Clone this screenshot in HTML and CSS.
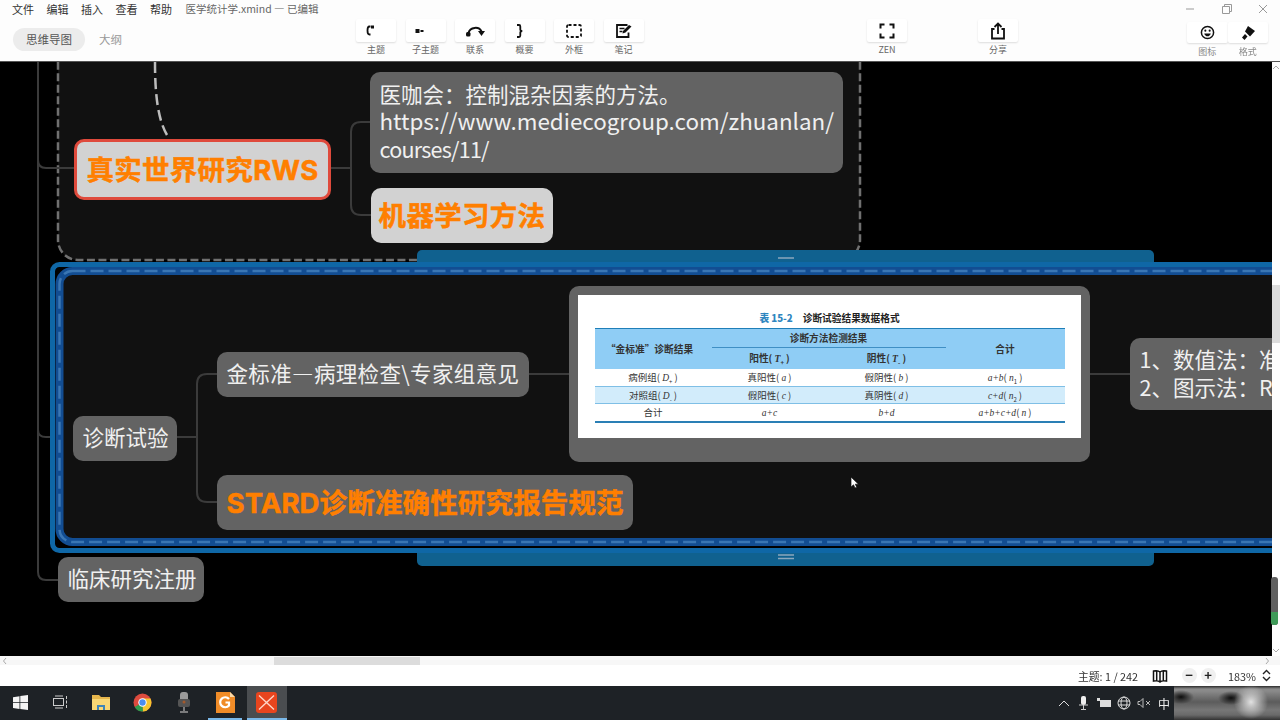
FILE: index.html
```html
<!DOCTYPE html>
<html lang="zh">
<head>
<meta charset="utf-8">
<title>医学统计学.xmind</title>
<link rel="stylesheet" href="styles.css">
</head>
<body>
<div class="app">
  <header class="header">
    <div class="left">
      <nav class="menu">
        <span>文件</span><span>编辑</span><span>插入</span><span>查看</span><span>帮助</span>
        <span class="filename">医学统计学.xmind — 已编辑</span>
      </nav>
      <div class="tabs"><span class="tab active">思维导图</span><span class="tab">大纲</span></div>
    </div>
    <div class="tools">
      <div class="tool"><div class="btn"><svg class="off" width="9" height="11" viewBox="0 0 9 11"><path d="M4.500 1.500H3.500C2 1.500 1.500 2.500 1.500 5.500s.5 4 2 4h1" fill="none" stroke="#111" stroke-width="1.800"/><rect x="5" y="0.500" width="3" height="3" fill="#111"/></svg></div><span>主题</span></div>
      <div class="tool"><div class="btn"><svg class="off" width="9" height="6" viewBox="0 0 9 6"><rect x="0.500" y="1" width="4" height="4" fill="#111"/><rect x="5.500" y="2" width="3" height="2" fill="#111"/></svg></div><span>子主题</span></div>
      <div class="tool"><div class="btn"><svg width="20" height="12" viewBox="0 0 20 12"><path d="M3.500 8C5 2 14 1 16.500 6.500" fill="none" stroke="#111" stroke-width="2"/><rect x="1" y="7" width="4.500" height="4.500" rx="1.500" fill="#111"/><path d="M13 6h7L16.500 11z" fill="#111"/></svg></div><span>联系</span></div>
      <div class="tool"><div class="btn"><svg class="off-s" width="9" height="14" viewBox="0 0 9 14"><path d="M1 1h2c1 0 1.300.7 1.300 1.500V5.500c0 1 .5 1.500 2 1.500-1.500 0-2 .5-2 1.500v3c0 .8-.3 1.500-1.300 1.500H1" fill="none" stroke="#111" stroke-width="1.800"/></svg></div><span>概要</span></div>
      <div class="tool"><div class="btn"><svg width="16" height="14" viewBox="0 0 16 14"><rect x="1" y="1" width="14" height="12" rx="1.500" fill="none" stroke="#111" stroke-width="1.800" stroke-dasharray="3 2"/></svg></div><span>外框</span></div>
      <div class="tool"><div class="btn"><svg width="16" height="14" viewBox="0 0 16 14"><path d="M12.500 8.500V13H1V1h10.500" fill="none" stroke="#111" stroke-width="1.800"/><path d="M3.500 4.500h5M3.500 7.500h3" stroke="#111" stroke-width="1.500"/><path d="M6.500 9.500l.5-2.500 6-6 2.500 1.500-6 6z" fill="#111"/></svg></div><span>笔记</span></div>
    </div>
    <div class="tool zen"><div class="btn"><svg width="16" height="16" viewBox="0 0 16 16"><path d="M1.500 5.500v-4h4M10.500 1.500h4v4M14.500 10.500v4h-4M5.500 14.500h-4v-4" fill="none" stroke="#111" stroke-width="2"/></svg></div><span>ZEN</span></div>
    <div class="tool share"><div class="btn"><svg width="16" height="18" viewBox="0 0 16 18"><path d="M4.500 7H2v9.500h12V7h-2.500" fill="none" stroke="#111" stroke-width="1.800"/><path d="M8 12V2M4.500 5L8 1.500 11.500 5" fill="none" stroke="#111" stroke-width="1.800"/></svg></div><span>分享</span></div>
    <div class="right">
      <div class="winctl">
        <svg width="10" height="10" viewBox="0 0 10 10"><path d="M1 5h8" stroke="#999"/></svg>
        <svg width="10" height="10" viewBox="0 0 10 10"><path d="M.5 2.500h7v7h-7zM2.500 2.500v-2h7v7h-2" fill="none" stroke="#999"/></svg>
        <svg width="10" height="10" viewBox="0 0 10 10"><path d="M1 1l8 8M9 1l-8 8" stroke="#999"/></svg>
      </div>
      <div class="side">
        <div class="tool"><div class="btn"><svg width="15" height="15" viewBox="0 0 16 16"><circle cx="8" cy="8" r="6.500" fill="none" stroke="#111" stroke-width="1.600"/><circle cx="5.700" cy="6" r="1.100" fill="#111"/><circle cx="10.300" cy="6" r="1.100" fill="#111"/><path d="M4.500 9h7c-.5 2-2 3-3.500 3s-3-1-3.500-3z" fill="#111"/></svg></div><span>图标</span></div>
        <div class="tool"><div class="btn"><svg width="16" height="16" viewBox="0 0 16 16"><path d="M8 1l7 5-5 5.500-5-5z" fill="#111"/><path d="M5 9l2.500 2.500-3 3.500-2.500-2.500z" fill="#111"/></svg></div><span>格式</span></div>
      </div>
    </div>
  </header>

  <div class="main">
    <section class="canvas">
      <svg class="wires" width="1272" height="594" viewBox="0 62 1272 594">
        <rect class="group-fill" x="58" y="30" width="802" height="230" rx="20"/>
        <rect class="group-dash" x="58" y="30" width="802" height="230" rx="20"/>
        <path class="wire" d="M38 62V160q0 8 8 8H74M38 160V430q0 7 8 7H73M38 430V572q0 8 8 8H58"/>
        <path class="curve" d="M155 62C155 90 157 118 167 135"/>
        <path class="wire" d="M331 168H351M370 122H361q-10 0-10 10V205q0 10 10 10H371"/>
        <rect class="tab-blue" x="417" y="250" width="737" height="30" rx="5"/>
        <rect class="tab-blue" x="417" y="535" width="737" height="31" rx="5"/>
        <rect class="band-outer" x="52.500" y="264.500" width="1320" height="286" rx="7"/>
        <rect class="band-inner" x="59.500" y="271" width="1320" height="271" rx="13"/>
        <rect class="band-dash" x="59.500" y="271" width="1320" height="271" rx="13"/>
        <path class="grip" d="M778 258h16M778 555h16M778 558.500h16"/>
        <path class="wire" d="M177 437H197M217 374H207q-10 0-10 10V492q0 10 10 10H217M529 374H569M1090 374H1130"/>
      </svg>

      <div class="node light rws">真实世界研究RWS</div>
      <div class="node dark link"><div>医咖会&#xFF1A;控制混杂因素的方法。<br><span class="url">https://www.mediecogroup.com/zhuanlan/</span><br><span class="url-end">courses/11/</span></div></div>
      <div class="node light ml">机器学习方法</div>
      <div class="node dark diag">诊断试验</div>
      <div class="node dark gold">金标准—病理检查\专家组意见</div>
      <div class="node dark stard">STARD诊断准确性研究报告规范</div>
      <div class="node dark reg">临床研究注册</div>
      <div class="node dark method"><div>1、数值法&#xFF1A;准<br>2、图示法&#xFF1A;R</div></div>

      <figure class="node figure">
        <div class="paper">
          <p class="caption"><b>表 15-2</b>诊断试验结果数据格式</p>
          <table class="data">
            <colgroup><col class="c1"><col class="c2"><col class="c3"><col class="c4"></colgroup>
            <tr class="hd h1"><th class="gold-head" rowspan="2">“金标准”诊断结果</th><th colspan="2"><span class="under">诊断方法检测结果</span></th><th rowspan="2">合计</th></tr>
            <tr class="hd h2"><th>阳性( <i>T</i><sub>+</sub> )</th><th>阴性( <i>T</i><sub>-</sub> )</th></tr>
            <tr class="r1"><td>病例组( <i>D</i><sub>+</sub> )</td><td>真阳性( <i>a</i> )</td><td>假阴性( <i>b</i> )</td><td><i>a+b</i>( <i>n</i><sub>1</sub> )</td></tr>
            <tr class="alt"><td>对照组( <i>D</i><sub>-</sub> )</td><td>假阳性( <i>c</i> )</td><td>真阴性( <i>d</i> )</td><td><i>c+d</i>( <i>n</i><sub>2</sub> )</td></tr>
            <tr class="last"><td>合计</td><td><i>a+c</i></td><td><i>b+d</i></td><td><i>a+b+c+d</i>( <i>n</i> )</td></tr>
          </table>
        </div>
      </figure>
      <svg class="cursor" width="9" height="13" viewBox="0 0 9 13"><path d="M1 1v10l2.500-2.200L5 12l1.800-.8-1.500-3H8.500z" fill="#fff" stroke="#111" stroke-width=".7"/></svg>
    </section>
    <aside class="vbar">
      <svg class="arrow-up" width="8" height="6" viewBox="0 0 8 6"><path d="M1 5l3-3 3 3" fill="none" stroke="#aaa"/></svg>
      <div class="vthumb"></div>
      <div class="mini"><div class="mini-green"></div></div>
      <svg class="arrow-down" width="8" height="6" viewBox="0 0 8 6"><path d="M1 1l3 3 3-3" fill="none" stroke="#aaa"/></svg>
    </aside>
  </div>

  <div class="hscroll">
    <svg width="6" height="8" viewBox="0 0 6 8"><path d="M4 1L1.500 4 4 7" fill="none" stroke="#aaa"/></svg>
    <div class="hthumb"></div>
    <svg class="harrow-r" width="6" height="8" viewBox="0 0 6 8"><path d="M2 1l2.500 3L2 7" fill="none" stroke="#aaa"/></svg>
  </div>

  <footer class="status">
    <span class="count">主题: 1 / 242</span>
    <svg class="map" width="16" height="14" viewBox="0 0 16 14"><path d="M8 3C6.500 1.500 4 1.500 1.500 2v10c2.500-.5 5-.5 6.500 1 1.500-1.500 4-1.500 6.500-1V2C12 1.500 9.500 1.500 8 3zM8 3v10M4.700 2v10M11.300 2v10" fill="none" stroke="#111" stroke-width="1.500"/></svg>
    <span class="zoom-btn first">−</span>
    <span class="zoom-btn">+</span>
    <span class="pct">183%</span>
    <svg class="updown" width="9" height="13" viewBox="0 0 9 13"><path d="M1 5l3.500-3.500L8 5M1 8l3.500 3.500L8 8" fill="none" stroke="#222" stroke-width="1.400"/></svg>
  </footer>

  <div class="taskbar">
    <div class="task-item start"><svg width="15" height="15" viewBox="0 0 15 15"><path d="M0 2.200l6.500-1v6H0zM7.300 1l7.700-1v7.200H7.300zM0 8h6.500v6L0 13zM7.300 8H15v7l-7.700-1z" fill="#f4f4f4"/></svg></div>
    <div class="task-item view"><svg width="16" height="14" viewBox="0 0 16 14"><path d="M3 1h8M3 13h8" stroke="#ccc"/><rect x="1.500" y="3.500" width="10" height="7" fill="none" stroke="#ccc"/><path d="M14.500 1v12" stroke="#ccc" stroke-dasharray="3 1.500"/></svg></div>
    <div class="task-item"><svg width="20" height="17" viewBox="0 0 20 17"><path d="M1 1h7l2 2h9v13H1z" fill="#e6b64c"/><rect x="1" y="5" width="18" height="11" fill="#f8d775"/><rect x="6" y="11" width="8" height="5" fill="#3f85b8"/><rect x="8" y="13" width="4" height="3" fill="#f8d775"/></svg></div>
    <div class="task-item"><svg width="19" height="19" viewBox="0 0 19 19"><circle cx="9.500" cy="9.500" r="9" fill="#dd4b3e"/><path d="M9.500 9.500L1.700 14A9 9 0 0 0 10 18.500z" fill="#2f9e4f"/><path d="M9.500 5.500h8A9 9 0 0 1 10 18.500z" fill="#f6c52f"/><circle cx="9.500" cy="9.500" r="4.200" fill="#fff"/><circle cx="9.500" cy="9.500" r="3.200" fill="#4a8df0"/></svg></div>
    <div class="task-item"><svg width="12" height="21" viewBox="0 0 12 21"><rect x="2" y="0" width="8" height="13" rx="3" fill="#9b9b9b"/><rect x="0" y="7" width="12" height="8" rx="2" fill="#555"/><circle cx="6" cy="10" r="1.500" fill="#a55a2c"/><path d="M6 15v4M2 20h8" stroke="#999" stroke-width="1.500"/></svg></div>
    <div class="task-item open pdf"><svg width="21" height="21" viewBox="0 0 21 21"><path d="M1 0h14l5 5v16H1z" fill="#f08c28"/><path d="M15 0l5 5h-5z" fill="#fbd9a8"/><path d="M14 7a5 5 0 1 0 0 6.500V10.500h-3.500" fill="none" stroke="#fff" stroke-width="2.200"/></svg></div>
    <div class="task-item open current"><svg width="21" height="21" viewBox="0 0 21 21"><rect width="21" height="21" rx="3" fill="#e8451e"/><path d="M3 3.500l15 14M18 3.500l-15 14" stroke="#ffd6c8" stroke-width="1.400"/></svg></div>
    <div class="tray">
      <svg width="12" height="7" viewBox="0 0 12 7"><path d="M1 6l5-5 5 5" fill="none" stroke="#ddd"/></svg>
      <svg width="9" height="14" viewBox="0 0 9 14"><rect x="2" y="0" width="5" height="9" rx="2" fill="#eee"/><path d="M0 9h9M4.500 9v4M2 13.500h5" stroke="#ccc"/></svg>
      <svg width="14" height="10" viewBox="0 0 14 10"><rect x="3" y="2" width="11" height="7" fill="#ddd"/><rect x="0" y="0" width="3" height="3" fill="#ddd"/></svg>
      <svg width="14" height="14" viewBox="0 0 14 14"><circle cx="7" cy="7" r="6" fill="none" stroke="#ddd"/><ellipse cx="7" cy="7" rx="3" ry="6" fill="none" stroke="#ddd"/><path d="M1 5h12M1 9h12" stroke="#ddd"/></svg>
      <svg width="14" height="10" viewBox="0 0 14 10"><path d="M1 3.500h2l3-3v9l-3-3H1z" fill="none" stroke="#bbb"/><path d="M9 3l4 4M13 3l-4 4" stroke="#bbb"/></svg>
      <span class="ime">中</span>
    </div>
    <div class="blurred"></div>
  </div>
</div>
</body>
</html>
```

FILE: styles.css
```css
* { box-sizing: border-box; }
html, body { margin: 0; height: 100%; overflow: hidden; }
body { font-family: "Noto Sans", "Noto Sans CJK SC", sans-serif; background: #000; }
.app { width: 1280px; height: 720px; display: flex; flex-direction: column; overflow: hidden; filter: blur(0.45px); }

/* header */
.header { height: 62px; flex: none; display: flex; background: #fdfdfd; border-bottom: 1px solid #555; font-family: "Noto Sans CJK SC", sans-serif; }
.left { width: 356px; flex: none; padding-left: 12px; }
.menu { height: 17px; display: flex; gap: 12.500px; align-items: center; font-size: 11px; color: #333; }
.filename { margin-left: 1px; font-size: 10.500px; color: #666; white-space: nowrap; }
.tabs { display: flex; align-items: center; margin-top: 10.500px; margin-left: 1px; }
.tab { font-size: 11.500px; color: #999; margin-left: 14px; }
.tab.active { margin-left: 0; width: 72px; height: 23px; line-height: 23px; text-align: center; background: #ececec; border-radius: 12px; color: #555; }
.tools { display: flex; gap: 9.500px; padding-top: 19px; }
.tool { width: 40px; display: flex; flex-direction: column; align-items: center; font-size: 9px; color: #666; }
.tool span { margin-top: 1px; line-height: 13px; }
.btn { width: 100%; height: 23px; display: flex; align-items: center; justify-content: center; background: #fff; box-shadow: 0 1px 2px rgba(0,0,0,.13); border-radius: 2px; }
.off { margin-right: 12px; }
.off-s { margin-right: 9px; }
.zen { margin-left: 223.500px; padding-top: 19px; }
.share { margin-left: 71px; padding-top: 19px; }
.right { width: 93px; margin-left: 169px; flex: none; }
.winctl { height: 22px; margin-left: -2px; display: flex; align-items: center; justify-content: space-between; padding: 0 12px 5px 0; }
.side { display: flex; }
.side .tool { width: 40.500px; }
.side .btn { height: 21px; }
.side .tool span { margin-top: 2px; color: #888; }

/* canvas */
.main { height: 594px; flex: none; display: flex; }
.canvas { position: relative; flex: 1; background: #000; overflow: hidden; font-family: "Noto Sans CJK SC", sans-serif; }
.wires { position: absolute; left: 0; top: 0; display: block; }
.group-fill { fill: #111; }
.group-dash { fill: none; stroke: #707070; stroke-width: 2.500; stroke-dasharray: 8 3.500; }
.wire { fill: none; stroke: #3b3b3b; stroke-width: 2; }
.curve { fill: none; stroke: #bdbdbd; stroke-width: 2.500; stroke-dasharray: 11 5; }
.tab-blue { fill: #10618f; }
.band-outer { fill: #000; stroke: #0f67a6; stroke-width: 5; }
.band-inner { fill: #111; stroke: #124d92; stroke-width: 8; }
.band-dash { fill: none; stroke: #3a76b3; stroke-width: 2.500; stroke-dasharray: 13 5; }
.grip { stroke: #8aa7bd; stroke-width: 1.300; fill: none; }
.cursor { position: absolute; left: 850px; top: 414px; }

.node { position: absolute; margin: 0; border-radius: 10px; white-space: nowrap; }
.dark { background: #636363; color: #f0f0f0; font-size: 21.500px; line-height: 27.500px; display: flex; align-items: center; padding: 0 9.500px 3px; }
.light { background: #d2d2d2; color: #ff7f00; font: 700 27.500px "Inter", "Noto Sans CJK SC", sans-serif; letter-spacing: 0.300px; display: flex; align-items: center; justify-content: center; padding-bottom: 3px; -webkit-text-stroke: 0.5px #ff7f00; }
.url { font-size: 22.400px; }
.url-end { letter-spacing: -0.750px; }
.rws { left: 74px; top: 77px; width: 257px; height: 61px; border: 3px solid #df4a3c; }
.ml { left: 371px; top: 126px; width: 182px; height: 55px; }
.link { left: 370px; top: 10px; width: 473px; height: 101px; }
.diag { left: 73px; top: 354px; width: 104px; height: 45px; }
.gold { left: 217px; top: 290px; width: 312px; height: 45px; letter-spacing: 0.350px; }
.stard { left: 217px; top: 413px; width: 416px; height: 55px; color: #ff7f00; font: 700 27.500px "Inter", "Noto Sans CJK SC", sans-serif; letter-spacing: 0.150px; -webkit-text-stroke: 0.5px #ff7f00; }
.reg { left: 58px; top: 495px; width: 146px; height: 45px; }
.method { left: 1130px; top: 276px; width: 180px; height: 72px; }
.figure { left: 569px; top: 224px; width: 521px; height: 176px; background: #636363; padding: 9px; }

/* table image */
.paper { width: 503px; height: 143px; background: #fff; display: flex; flex-direction: column; align-items: center; color: #333; }
.caption { margin: 0; height: 33px; padding-top: 17px; font: 700 9.700px/12px "Noto Sans CJK SC", sans-serif; color: #222; }
.caption b { color: #2f86c0; margin-right: 10px; }
.data { width: 470px; table-layout: fixed; border-collapse: collapse; font-size: 9.500px; text-align: center; border-top: 1px solid #1f7fb8; border-bottom: 2px solid #2a7fb5; font-family: "Noto Sans CJK SC", sans-serif; }
.c1 { width: 117px; } .c2 { width: 116px; } .c3 { width: 118px; } .c4 { width: 119px; }
.data th, .data td { padding: 0; line-height: 12px; }
.data th { font-size: 9.700px; font-weight: 700; color: #333; }
.data .gold-head { padding-right: 7px; }
.hd { background: #8fcdf5; }
.h1 th, .h2 th { height: 20px; }
.under { display: block; border-bottom: 1px solid #3f8fc4; padding-bottom: 3px; margin-top: 2px; }
.r1 td { height: 18px; }
.alt { background: #d2ecfb; }
.alt td { height: 17px; border-top: 1px solid #7fbfe6; border-bottom: 1px solid #7fbfe6; }
.last td { height: 18px; }
.data i { font-family: "Liberation Serif", serif; }
.data sub { font-size: 6px; line-height: 0; }

/* right scrollbar */
.vbar { position: relative; width: 8px; background: #fdfdfd; flex: none; }
.arrow-up { position: absolute; left: 0; top: 2px; }
.arrow-down { position: absolute; left: 0; top: 586px; }
.vthumb { position: absolute; left: 0; top: 223px; width: 8px; height: 58px; background: #dcdcdc; }
.mini { position: absolute; left: -1px; top: 515px; width: 7px; height: 48px; border-radius: 3px; background: #5f5f5f; overflow: hidden; display: flex; align-items: flex-end; }
.mini-green { width: 100%; height: 13px; background: #3e9a58; }

/* bottom scrollbar */
.hscroll { height: 9px; flex: none; position: relative; background: #f7f7f7; display: flex; align-items: center; padding-left: 2px; }
.hthumb { position: absolute; left: 274px; top: 1px; width: 146px; height: 8px; background: #dcdcdc; }
.harrow-r { position: absolute; right: 10px; top: 1px; }

/* status */
.status { height: 21px; flex: none; background: #fff; display: flex; align-items: center; font-size: 10.800px; color: #333; font-family: "Noto Sans CJK SC", sans-serif; }
.count { margin-left: 1078px; width: 60px; white-space: nowrap; }
.map { margin-left: 14px; }
.zoom-btn { width: 15px; height: 15px; border-radius: 50%; background: #f0f0f0; text-align: center; line-height: 14px; font-size: 13px; font-weight: 700; color: #222; margin-left: 4px; }
.zoom-btn.first { margin-left: 13.500px; }
.pct { margin-left: 12.500px; width: 26px; }
.updown { margin-left: 8px; }

/* taskbar */
.taskbar { height: 34px; flex: none; display: flex; align-items: center; background: #1e2226; }
.task-item { width: 41.400px; height: 34px; display: flex; align-items: center; justify-content: center; border-bottom: 2px solid transparent; flex: none; }
.start { width: 40px; }
.view { width: 40.400px; }
.open { border-bottom-color: #7ab8e8; }
.pdf { width: 34px; margin: 0 3.700px; }
.current { width: 40px; margin: 0 0.700px; background: #4a4d50; }
.tray { margin-left: 766.600px; flex: none; display: grid; grid-template-columns: repeat(6, 20px); justify-items: center; align-items: center; }
.ime { color: #eee; font: 12px "Noto Sans CJK SC", sans-serif; }
.blurred { flex: 1; height: 34px; background:
  radial-gradient(circle 17px at 77px 16px, #e2e2e2, rgba(226,226,226,0)),
  radial-gradient(ellipse 13px 7px at 7px 11px, #0c0c0c, rgba(12,12,12,0)),
  radial-gradient(ellipse 13px 7px at 57px 12px, #0c0c0c, rgba(12,12,12,0)),
  linear-gradient(#2b2b2b, #8a8a8a 3px, #8a8a8a 5px, #5c5c5c 16px, #777 24px, #6a6a6a 29px, #333);
}
```
